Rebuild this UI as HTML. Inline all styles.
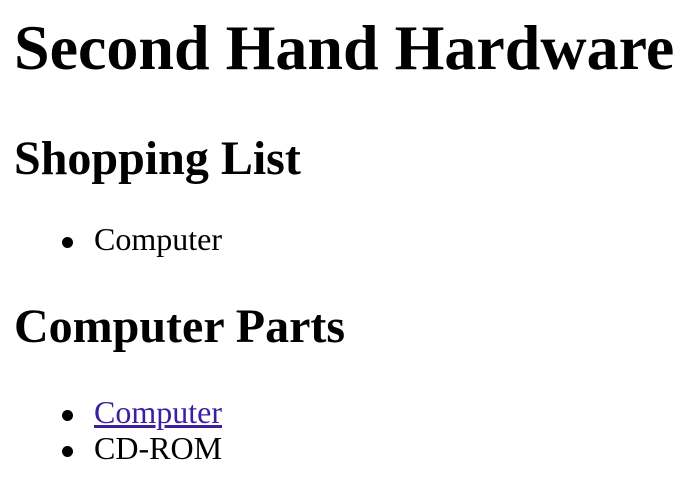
<!DOCTYPE html>
<html><head><style>
body{margin:0;font-family:"Liberation Serif",serif;color:#000;background:#fff}
div{position:absolute;white-space:nowrap}
.h1{font-size:64px;font-weight:bold;line-height:64px;left:14px;top:16px}
.h2{font-size:48px;font-weight:bold;line-height:48px;left:14px}
.li{font-size:32px;line-height:32px;left:94px}
.li:before{content:"";position:absolute;left:-32px;top:14px;width:11px;height:11px;border-radius:50%;background:#000}
a{color:#3c1fa0}
</style></head><body>
<div class="h1">Second Hand Hardware</div>
<div class="h2" style="top:135px">Shopping List</div>
<div class="li" style="top:223px">Computer</div>
<div class="h2" style="top:303px">Computer Parts</div>
<div class="li" style="top:396px"><a href="#">Computer</a></div>
<div class="li" style="top:432px">CD-ROM</div>
</body></html>
